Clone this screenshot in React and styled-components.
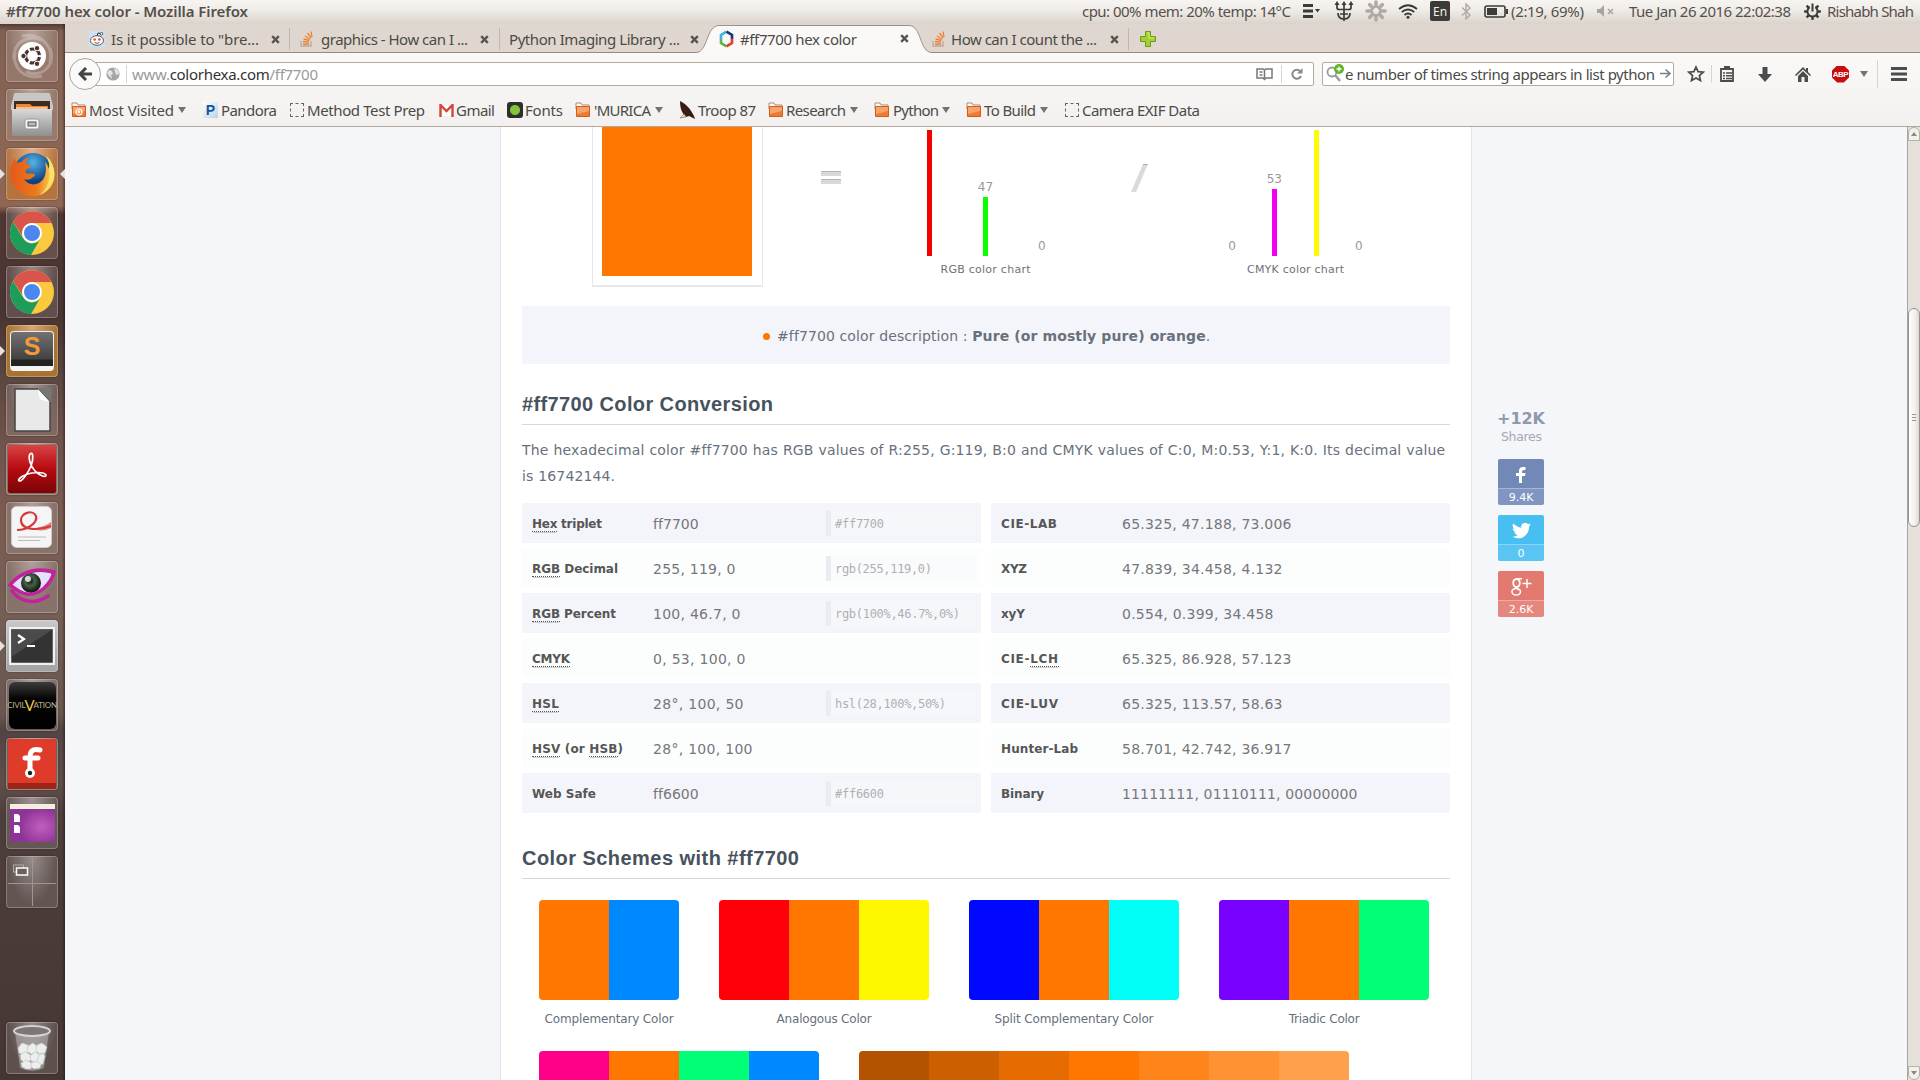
import React, { useLayoutEffect, useRef, useState } from 'react';
import styled, { createGlobalStyle, css } from 'styled-components';

const GlobalStyle = createGlobalStyle`
  * { box-sizing: border-box; }
  html, body { margin: 0; padding: 0; background: #f4f6fa; overflow: hidden; }
  svg { display: block; flex: none; }
`;

const UI = `'Noto Sans', 'Open Sans', sans-serif`;
const SITE = `'DejaVu Sans', Verdana, sans-serif`;

/* Text that spreads its letters over a known width */
const FitSpan = styled.span`
  display: inline-block;
  white-space: nowrap;
  flex: none;
  margin-left: ${(p) => p.$ml || 0}px;
`;
function Fit({ w, ml, children }) {
  const ref = useRef(null);
  const [gap, setGap] = useState(0);
  useLayoutEffect(() => {
    const el = ref.current;
    const before = el.style.letterSpacing;
    const width = el.style.width;
    el.style.letterSpacing = '0px';
    el.style.width = 'auto';
    const natural = el.getBoundingClientRect().width;
    const count = el.textContent.length;
    el.style.letterSpacing = before;
    el.style.width = width;
    setGap((w - natural) / Math.max(1, count - 1));
  }, [w]);
  return (
    <FitSpan ref={ref} $ml={ml} style={{ letterSpacing: `${gap}px`, width: `${w}px` }}>
      {children}
    </FitSpan>
  );
}

/* ---------- desktop frame ---------- */
const Desktop = styled.div`
  width: 1920px;
  height: 1080px;
  display: grid;
  grid-template: 24px 1056px / 65px 1855px;
  overflow: hidden;
  font-family: ${UI};
  color: #4c4a46;
`;
const Panel = styled.header`
  grid-column: 1 / 3;
  display: flex;
  align-items: center;
  background: linear-gradient(#f6f4f1, #f1eeea 35%, #dbd3cb);
  font-size: 15px;
  line-height: 22px;
  color: #55504b;
  padding: 0 0 2px 6px;
`;
const PanelTitle = styled.div`
  font-weight: 600;
  width: 1076px;
`;
const Slot = styled.div`
  width: ${(p) => p.$w}px;
  margin-left: ${(p) => p.$ml || 0}px;
  flex: none;
  display: flex;
  align-items: center;
  justify-content: center;
`;
const LangBox = styled.div`
  width: 20px;
  height: 20px;
  margin-left: 12px;
  border-radius: 2px;
  background: #3c3b38;
  color: #f2efea;
  font-size: 12px;
  line-height: 21px;
  text-align: center;
`;

/* ---------- launcher ---------- */
const Launcher = styled.aside`
  display: flex;
  flex-direction: column;
  padding: 6px 0 6px 6px;
  gap: 7px;
  background:
    linear-gradient(90deg, rgba(255,255,255,.03) 0 62px, rgba(30,15,10,.45) 65px),
    linear-gradient(#4c342a 0, #7d5c4e 7px, #866150 100px, #8d6150 182px, #4b312b 190px, #442e2c 290px,
      #59423c 360px, #6c4e45 420px, #77584c 500px, #705950 590px, #65524b 690px, #4e3e3b 705px, #5b4844 760px,
      #493936 790px, #453532 900px, #3f302d 1056px);
`;
const Tile = styled.div`
  position: relative;
  width: 52px;
  height: 52px;
  flex: none;
  border-radius: 4px;
  display: flex;
  align-items: center;
  justify-content: center;
  background: ${(p) => p.$bg || 'radial-gradient(ellipse at 50% 0, rgba(255,255,255,.42), rgba(255,255,255,.13) 65%)'};
  box-shadow: inset 0 0 0 1px rgba(255,255,255,.25), 0 0 2px rgba(0,0,0,.4);
  margin-top: ${(p) => (p.$last ? 'auto' : 0)};
`;
const Pip = styled.i`
  position: absolute;
  top: 21px;
  border: 5px solid transparent;
  ${(p) => (p.$right
    ? css`right: -7px; border-right-color: #e6e2df; border-left-width: 0;`
    : css`left: -6px; border-left-color: #e6e2df; border-right-width: 0;`)}
`;
const CivBox = styled.div`
  width: 47px;
  height: 47px;
  border-radius: 6px;
  background: linear-gradient(#3c3c3c, #050505 35%, #000);
  color: #b9b48c;
  display: flex;
  align-items: center;
  justify-content: center;
  font: 8px/10px 'Lato', sans-serif;
  letter-spacing: -0.2px;
  b { color: #e3c643; font-size: 15px; font-weight: 400; margin: 0 -1px; }
`;

const Ubuntu = () => (
  <svg width="52" height="52" viewBox="0 0 52 52">
    <g fill="none" stroke="#fff" opacity=".25" strokeWidth="3">
      <path d="M8 30C6 12 22 4 36 10" /><path d="M44 18c6 18-8 30-24 24" /><path d="M16 6c18-4 32 10 28 26" /><path d="M36 46C18 50 6 38 9 22" />
    </g>
    <circle cx="26" cy="26" r="14" fill="#fff" />
    <circle cx="26.500" cy="26" r="7" fill="none" stroke="#4a342e" strokeWidth="3.200" strokeDasharray="12.600 2" strokeDashoffset="-1" />
    <g fill="#4a342e" stroke="#fff" strokeWidth="1"><circle cx="17.500" cy="26" r="2.700" /><circle cx="31" cy="18.200" r="2.700" /><circle cx="31" cy="33.800" r="2.700" /></g>
  </svg>
);
const Files = () => (
  <svg width="52" height="52" viewBox="0 0 52 52">
    <defs><linearGradient id="cab" x2="0" y2="1"><stop stopColor="#d9d9d9" /><stop offset="1" stopColor="#8f8f8f" /></linearGradient></defs>
    <path d="M8 5q0-1 1-1h34q1 0 1 1l3 12v4H5v-4z" fill="#c9c7c5" />
    <path d="M8 12h36v10H8z" fill="#3f2a20" />
    <path d="M10 15h14l2 2h16v5H10z" fill="#f08437" /><path d="M10 18h31v4H10z" fill="#f6c08f" />
    <path d="M6 20h40v25q0 2-2 2H8q-2 0-2-2z" fill="url(#cab)" />
    <rect x="19" y="30" width="14" height="10" rx="2" fill="#f5f5f5" stroke="#999" /><rect x="22" y="33" width="8" height="4" fill="#bbb" stroke="#555" />
  </svg>
);
const Firefox = () => (
  <svg width="48" height="48" viewBox="0 0 48 48">
    <defs>
      <radialGradient id="fxg" cx=".5" cy=".25"><stop stopColor="#52b5e8" /><stop offset="1" stopColor="#12407f" /></radialGradient>
      <linearGradient id="fxf" x1="0" y1="0" x2="1" y2="0"><stop stopColor="#e4581c" /><stop offset=".6" stopColor="#ee7a1c" /><stop offset="1" stopColor="#fce05a" /></linearGradient>
    </defs>
    <circle cx="25" cy="22" r="19" fill="url(#fxg)" />
    <path d="M5 12C3 16 2 20 2.500 25 3.500 37 13 46 25 46c12 0 21-9 21.500-21C46.500 18 43 9 38 6c3 5 4 9 3 13-1-3-2-5-4-7 2 8 1 17-6 21-6 3-12 1-15-4 4 2 7 0 9-2 2-1 3-2 1-3-3-1-5 0-8-1-1-3 2-5 5-6 0-2-3-3-5-3 0-3 1-5 3-6-4 0-6 2-7 4-2 0-4 0-5 1-1-1-2-3-2-5-1 1-2 2-2 4z" fill="url(#fxf)" />
    <path d="M38 6c7 6 9 14 8 21-1 8-7 15-14 18 7-6 11-15 9-26 1-4 0-8-3-13z" fill="#fbe56b" opacity=".85" />
  </svg>
);
const Chrome = () => (
  <svg width="46" height="46" viewBox="0 0 46 46">
    <circle cx="23" cy="23" r="22" fill="#fbc93d" />
    <path d="M4 12A22 22 0 0 1 42.500 13H23A10 10 0 0 0 13.500 26z" fill="#d9544a" />
    <path d="M3.950 12A22 22 0 0 0 22 45l9.500-16.500A10 10 0 0 1 14 28z" fill="#1c9d5b" />
    <circle cx="23" cy="23" r="10" fill="#fff" /><circle cx="23" cy="23" r="8" fill="#4b87ee" />
  </svg>
);
const SublimeBox = styled.div`
  width: 44px;
  height: 40px;
  border-radius: 4px;
  border: 1.500px solid #eee;
  border-bottom: 5px solid #f4f4f4;
  background: linear-gradient(#727272, #414141 80%, #222 82%);
  color: #ef9a3d;
  font: bold 25px/29px 'Liberation Sans', sans-serif;
  text-align: center;
`;
const Writer = () => (
  <svg width="52" height="52" viewBox="0 0 52 52"><path d="M9 5h23l12 13v29H9z" fill="#e9e9e9" stroke="#444" strokeWidth="1.500" /><path d="M32 4l13 14V4z" fill="#777" /><path d="M32 5l12 13-8-2q-4-1-4-11z" fill="#fff" /></svg>
);
const Acrobat = () => (
  <svg width="48" height="48" viewBox="0 0 48 48">
    <defs><linearGradient id="acr" x2="0" y2="1"><stop stopColor="#d84444" /><stop offset=".5" stopColor="#b60a10" /><stop offset="1" stopColor="#7a0508" /></linearGradient></defs>
    <rect width="48" height="48" rx="2" fill="url(#acr)" />
    <path d="M22 9c3-3 4 4 1 12-3 7-8 14-11 15-4 0 1-6 12-8 8-1 13 0 14 2 0 3-6 1-11-4-5-5-7-14-5-17z" fill="none" stroke="#fff" strokeWidth="1.700" />
  </svg>
);
const Evince = () => (
  <svg width="42" height="44" viewBox="0 0 42 44">
    <rect x=".5" y=".5" width="40" height="41" rx="5" fill="#f5f5f5" stroke="#ccc" />
    <path d="M6 24C16 24 27 17 25 10 22 3 9 7 10 15c1 9 16 10 30 5" fill="none" stroke="#d5383c" strokeWidth="2.200" />
    <path d="M20 22q10 1 20-6v6q-10 5-20 0z" fill="#d5383c" opacity=".6" />
    <path d="M7 31h28M7 34.500h22" stroke="#bbb" strokeWidth="1" />
  </svg>
);
const Eye = () => (
  <svg width="48" height="38" viewBox="0 0 48 38">
    <defs><radialGradient id="iris" cx=".45" cy=".4"><stop stopColor="#111" /><stop offset=".5" stopColor="#456446" /><stop offset="1" stopColor="#182019" /></radialGradient></defs>
    <path d="M3 17C12 7 26-1 44 6c-3 13-14 22-25 20C11 25 7 21 3 17z" fill="#e4e2fa" />
    <circle cx="23" cy="15" r="10" fill="url(#iris)" /><circle cx="20" cy="11" r="3" fill="#fff" opacity=".8" />
    <g fill="none" stroke="#c3229d" strokeWidth="3.500" strokeLinecap="round"><path d="M2 17C12 5 27-1 46 4c-3 12-15 24-27 22C11 25 7 20 2 17" /><path d="M4 23c7 10 22 15 36 5" /></g>
  </svg>
);
const Terminal = () => (
  <svg width="46" height="38" viewBox="0 0 46 38">
    <rect x="1" y="1" width="44" height="36" fill="#333" stroke="#f1f1f1" strokeWidth="2.500" /><path d="M2 2h42L2 30z" fill="#555" opacity=".7" />
    <path d="M9 8l6 4-6 4M18 19h8" fill="none" stroke="#fff" strokeWidth="2.200" />
  </svg>
);
const Fritz = () => (
  <svg width="48" height="50" viewBox="0 0 48 50">
    <rect width="48" height="50" fill="#de3b2a" /><path d="M0 44h48v6H0z" fill="#9d2418" />
    <path d="M32 11c-8-2-10 2-10 7v14M17 19h13" fill="none" stroke="#fff" strokeWidth="5" strokeLinecap="round" /><circle cx="22" cy="34" r="5" fill="#fff" /><circle cx="22" cy="34" r="2.200" fill="#222" />
  </svg>
);
const WindowIcon = () => (
  <svg width="45" height="38" viewBox="0 0 45 38">
    <defs><radialGradient id="win" cx=".7" cy=".6"><stop stopColor="#c25fbf" /><stop offset="1" stopColor="#8d3497" /></radialGradient></defs>
    <rect width="45" height="38" rx="1" fill="url(#win)" /><path d="M0 0h45v5H0z" fill="#f2efdf" />
    <path d="M4 10h4l2 2v6H4zM4 21h4l2 2v6H4z" fill="#fff" />
  </svg>
);
const Workspace = () => (
  <svg width="50" height="50" viewBox="0 0 50 50">
    <path d="M25.500 1v48M1 26.500h48" stroke="#a09590" strokeWidth="1" /><rect x="6.500" y="8" width="10" height="7" fill="none" stroke="#aaa" /><rect x="9.500" y="11" width="11" height="7" fill="#6c605b" stroke="#fff" strokeWidth="1.500" />
  </svg>
);
const Trash = () => (
  <svg width="42" height="48" viewBox="0 0 42 48">
    <path d="M4 8l5 36q12 6 24 0l5-36z" fill="#c9cbca" opacity=".45" />
    <g fill="#eceded" stroke="#c3c6c4" strokeWidth=".7">
      <path d="M7 24l4-5 6 2 2 6-5 4-6-2z" /><path d="M17 22l5-3 5 4-1 6-6 1-4-3z" /><path d="M26 21l5-2 5 4-2 6-6 1-3-4z" />
      <path d="M9 31l5-3 6 3 0 5-5 3-5-3z" /><path d="M19 32l5-4 6 3 1 5-6 3-5-2z" /><path d="M28 31l4-2 2 3-2 8-5 2-1-5z" />
      <path d="M10 39l5-3 6 3-1 6-5 0-4-2z" /><path d="M20 39l5-2 5 3-1 4-6 1-3-2z" />
    </g>
    <ellipse cx="21" cy="7" rx="18" ry="5" fill="#7d7773" stroke="#d2d5d3" strokeWidth="2" />
  </svg>
);

/* ---------- browser chrome ---------- */
const Browser = styled.main`
  display: grid;
  grid-template-rows: 29px 74px 953px;
  min-width: 0;
`;
const TabStrip = styled.nav`
  display: flex;
  align-items: center;
  background: #dfd7cf;
  border-bottom: 1px solid #8f8a84;
  font-size: 15px;
  line-height: 26px;
`;
const Tab = styled.div`
  height: 28px;
  width: ${(p) => p.$w}px;
  padding-left: ${(p) => p.$pl}px;
  padding-top: 2px;
  flex: none;
  display: flex;
  align-items: center;
  ${(p) => p.$sep && css`background: linear-gradient(#bfb7b0, #bfb7b0) right 4px / 1px 22px no-repeat;`}
`;
const ActiveTab = styled.div`
  position: relative;
  width: 236px;
  height: 29px;
  margin-bottom: -1px;
  padding-left: 23px;
  flex: none;
  display: flex;
  align-items: center;
  > * + * { position: relative; }
`;
const TabShape = styled.svg`
  position: absolute;
  left: 0;
  top: 0;
`;
const Toolbars = styled.div`
  display: grid;
  grid-template-rows: 43px 30px;
  background: linear-gradient(#faf9f7, #f2f1f0);
  border-bottom: 1px solid #b5a99e;
`;
const NavBar = styled.div`
  display: flex;
  align-items: center;
  padding: 0 0 1px 4px;
  font-size: 15px;
  line-height: 22px;
`;
const BackButton = styled.div`
  position: relative;
  z-index: 1;
  width: 32px;
  height: 32px;
  border-radius: 50%;
  border: 1px solid #aaa39c;
  background: #fbfaf9;
  display: flex;
  align-items: center;
  justify-content: center;
`;
const Field = styled.div`
  width: ${(p) => p.$w}px;
  height: 24px;
  margin-left: ${(p) => p.$ml}px;
  padding-left: ${(p) => p.$pl}px;
  padding-bottom: 1px;
  border: 1px solid #b5aaa0;
  border-radius: 2px;
  background: #fff;
  display: flex;
  align-items: center;
  flex: none;
`;
const Rule = styled.i`
  width: 1px;
  height: ${(p) => p.$h || 18}px;
  margin-left: ${(p) => p.$ml || 0}px;
  background: #d9d4ce;
  flex: none;
`;
const Url = styled.div`
  color: #999;
  width: 1124px;
  margin-left: 5px;
  b { font-weight: 400; color: #333; }
`;
const Abp = styled.div`
  width: 17px;
  height: 17px;
  margin-left: 21px;
  background: #c70d0d;
  color: #fff;
  clip-path: polygon(30% 0, 70% 0, 100% 30%, 100% 70%, 70% 100%, 30% 100%, 0 70%, 0 30%);
  font: bold 8px/17px 'Liberation Sans', sans-serif;
  letter-spacing: -0.5px;
  text-align: center;
`;
const Down = styled.i`
  width: 0;
  height: 0;
  margin-left: ${(p) => p.$ml}px;
  border: 4px solid transparent;
  border-top: 6px solid #77726d;
  border-bottom: 0;
  flex: none;
`;
const Bookmarks = styled.div`
  display: flex;
  align-items: center;
  font-size: 15px;
  line-height: 28px;
  padding-bottom: 2px;
`;
const Bookmark = styled.div`
  width: ${(p) => p.$w}px;
  flex: none;
  display: flex;
  align-items: center;
`;
const BlankIcon = styled.i`
  width: 14px;
  height: 14px;
  border: 1px dashed #666;
`;
const Pandora = styled.i`
  width: 15px;
  height: 16px;
  background: linear-gradient(135deg, #fff, #b9d3e8);
  color: #14549b;
  font: bold 14px/16px 'Liberation Sans', sans-serif;
  text-align: center;
`;
const FontsIcon = styled.i`
  width: 16px;
  height: 16px;
  border-radius: 3px;
  background: radial-gradient(circle, #86c440 0 4.500px, #2c3129 5.500px);
`;
const Folder = ({ feed }) => (
  <svg width="16" height="16" viewBox="0 0 16 16">
    <path d="M1 1h5l1 2h7v4H1z" fill="#fff" stroke="#b98665" /><path d="M1.500 14.500v-10h13v10z" fill="#ee7b35" stroke="#cf5d1b" /><path d="M2 5h12v4L2 12z" fill="#f6a36c" />
    {feed && <g fill="none" stroke="#fff" strokeWidth="1.200"><circle cx="8" cy="10" r="3" /><circle cx="8" cy="10" r=".8" /></g>}
  </svg>
);
const StackIcon = () => (
  <svg width="14" height="16" viewBox="0 0 14 16"><path d="M1 10v5h10v-5" fill="none" stroke="#b9aaa0" strokeWidth="1.300" /><path d="M3 13h6M3 10.500l6 .6M3.600 8l5.800 1.500M5 5l5 3.200M7.500 2l3.700 5M11 .5l1 5.500" stroke="#ee8033" strokeWidth="1.300" /></svg>
);
const CloseX = () => <svg width="9" height="9" viewBox="0 0 9 9"><path d="M1.200 1.200l6.600 6.600M7.800 1.200L1.200 7.800" stroke="#59544f" strokeWidth="2.400" /></svg>;

/* ---------- web page ---------- */
const Viewport = styled.section`
  display: flex;
  background: #f4f6fa;
  overflow: hidden;
  font-family: ${SITE};
`;
const Card = styled.article`
  width: 972px;
  margin-left: 435px;
  padding: 0 21px;
  background: #fff;
  border: solid #e3e5ea;
  border-width: 0 1px;
  flex: none;
`;
const Hero = styled.div`
  display: grid;
  grid-template-columns: 171px 138px 169px 141px 169px;
  padding-left: 70px;
  height: 179px;
`;
const Frame = styled.div`
  height: 160px;
  padding: 0 10px 10px 9px;
  border: solid #e8e8e8;
  border-width: 0 1px 2px;
  &::before { content: ''; display: block; height: 149px; background: #ff7700; }
`;
const Sign = styled.div`
  display: flex;
  justify-content: center;
  padding: ${(p) => p.$pt}px 2px 0 0;
`;
const Chart = styled.div`
  text-align: center;
  font-size: 11px;
  line-height: 16px;
  color: #6f7276;
`;
const Bars = styled.div`
  display: flex;
  align-items: flex-end;
  height: 129px;
  margin-bottom: 6px;
`;
const BarCol = styled.div`
  flex: 1;
  display: flex;
  flex-direction: column;
  align-items: center;
  font-size: 12px;
  line-height: 20px;
  color: #999;
`;
const Bar = styled.i`
  width: 5px;
  height: ${(p) => p.$h}px;
  background: ${(p) => p.$c};
`;
const Description = styled.div`
  height: 58px;
  background: #f4f5fa;
  display: flex;
  align-items: center;
  padding: 1px 0 0 241px;
  font-size: 14px;
  color: #68717d;
`;
const Dot = styled.i`
  width: 7px;
  height: 7px;
  margin: 2px 7px 0 0;
  border-radius: 50%;
  background: #ff7700;
`;
const Heading = styled.h2`
  margin: ${(p) => p.$mt}px 0 0;
  height: ${(p) => p.$h}px;
  border-bottom: 1px solid #d5d8db;
  font: bold 20px/24px 'Liberation Sans', Arial, sans-serif;
  color: #47525d;
`;
const Para = styled.p`
  margin: 12px 0 14px;
  font-size: 14px;
  line-height: 26px;
  word-spacing: 0.3px;
  color: #68717d;
`;
const Tables = styled.div`
  display: grid;
  grid-template-columns: 459px 459px;
  gap: 10px;
`;
const Table = styled.div`
  display: grid;
  grid-auto-rows: 40px;
  gap: 5px;
`;
const Row = styled.div`
  display: grid;
  grid-template-columns: 121px 173px 150px;
  align-items: center;
  padding: 1px 0 0 10px;
  border-radius: 2px;
  background: ${(p) => (p.$even ? '#fcfefd' : '#f4f5fa')};
`;
const Name = styled.div`
  font-size: 12px;
  line-height: 16px;
  font-weight: bold;
  color: #565656;
  abbr { text-decoration: none; display: inline-block; height: 16px; border-bottom: 1px dotted #555; box-shadow: 0 2px 0 -1px #ccc; }
`;
const Value = styled.div`
  font-size: 14px;
  line-height: 18px;
  color: #75777a;
`;
const Code = styled.code`
  height: 25px;
  padding-left: 4px;
  border-left: 5px solid #ebecf0;
  background: ${(p) => (p.$even ? '#fafbfc' : '#f6f7fb')};
  font: 12px/26px 'DejaVu Sans Mono', monospace;
  color: #aeb0b3;
`;
const Schemes = styled.div`
  display: flex;
  gap: 40px;
  padding: 21px 0 0 17px;
`;
const Scheme = styled.figure`
  margin: 0;
  height: 130px;
  text-align: center;
  font-size: 12px;
  line-height: 18px;
  color: #66707c;
`;
const Palette = styled.div`
  display: flex;
  height: 100px;
  margin-bottom: 10px;
  border-radius: 4px;
  overflow: hidden;
`;
const Swatch = styled.i`
  width: 70px;
  background: ${(p) => p.$c};
`;
const Shares = styled.aside`
  width: 48px;
  margin-left: 26px;
  padding-top: 281px;
  flex: none;
  color: #a3a9b6;
  font-size: 12.500px;
  line-height: 16px;
`;
const Total = styled.div`
  font-size: 16px;
  line-height: 21px;
  font-weight: bold;
  color: #8e99ae;
`;
const ShareList = styled.div`
  display: grid;
  gap: 10px;
  margin-top: 14px;
`;
const ShareButton = styled.div`
  width: 46px;
  height: 46px;
  border-radius: 2px;
  background: ${(p) => p.$c};
  color: #fff;
  overflow: hidden;
`;
const ShareIcon = styled.div`
  height: 29px;
  display: flex;
  align-items: center;
  justify-content: center;
  padding-top: 3px;
`;
const ShareCount = styled.div`
  height: 17px;
  border-top: 1px solid rgba(255,255,255,.3);
  background: rgba(255,255,255,.1);
  font-size: 11px;
  line-height: 17px;
  text-align: center;
`;
const Scrollbar = styled.div`
  width: 13px;
  margin-left: auto;
  flex: none;
  display: flex;
  flex-direction: column;
  align-items: center;
  background: #e5e0d9;
  border-left: 1px solid #aaa49e;
`;
const ScrollEnd = styled.div`
  width: 12px;
  height: 14px;
  background: #f2f0ed;
  border: 1px solid #b7b0a9;
  border-radius: ${(p) => (p.$top ? '7px 7px 0 0' : '0 0 7px 7px')};
  margin-top: ${(p) => (p.$top ? 0 : 'auto')};
  display: flex;
  align-items: center;
  justify-content: center;
`;
const Thumb = styled.div`
  width: 12px;
  height: 219px;
  margin-top: 167px;
  border: 1px solid #99938e;
  border-radius: 6px;
  background: linear-gradient(90deg, #fff, #f2f0ee 60%, #ddd8d2);
  display: grid;
  place-content: center;
  gap: 2px;
  i { width: 4px; height: 1px; background: #999; }
`;

const A = ({ children }) => <abbr>{children}</abbr>;
const left = [
  [<><A>Hex</A> triplet</>, 70, 'ff7700', 45.5, '#ff7700', 49],
  [<><A>RGB</A> Decimal</>, 86, '255, 119, 0', 82.5, 'rgb(255,119,0)', 97],
  [<><A>RGB</A> Percent</>, 84, '100, 46.7, 0', 87.5, 'rgb(100%,46.7%,0%)', 125],
  [<A>CMYK</A>, 38, '0, 53, 100, 0', 92.5],
  [<A>HSL</A>, 27, '28°, 100, 50', 90.5, 'hsl(28,100%,50%)', 111],
  [<><A>HSV</A> (or <A>HSB</A>)</>, 91, '28°, 100, 100', 99.5],
  ['Web Safe', 64, 'ff6600', 45.5, '#ff6600', 49],
];
const right = [
  ['CIE-LAB', 56, '65.325, 47.188, 73.006', 169.5],
  ['XYZ', 26, '47.839, 34.458, 4.132', 160.5],
  ['xyY', 24, '0.554, 0.399, 34.458', 151.5],
  [<>CIE-<A>LCH</A></>, 57, '65.325, 86.928, 57.123', 169.5],
  ['CIE-LUV', 57, '65.325, 113.57, 58.63', 160.5],
  ['Hunter-Lab', 77, '58.701, 42.742, 36.917', 169.5],
  ['Binary', 43, '11111111, 01110111, 00000000', 235.5],
];
const ConversionTable = ({ rows }) => (
  <Table>
    {rows.map(([name, nw, value, vw, code, cw], i) => (
      <Row key={i} $even={i % 2 === 1}>
        <Name><Fit w={nw}>{name}</Fit></Name>
        <Value><Fit w={vw}>{value}</Fit></Value>
        {code && <Code $even={i % 2 === 1}><Fit w={cw}>{code}</Fit></Code>}
      </Row>
    ))}
  </Table>
);
const ColorChart = ({ data, caption, w }) => (
  <Chart>
    <Bars>{data.map(([label, h, c], i) => <BarCol key={i}>{label}{h > 0 && <Bar $h={h} $c={c} />}</BarCol>)}</Bars>
    <Fit w={w}>{caption}</Fit>
  </Chart>
);
const ColorScheme = ({ colors, name, w }) => (
  <Scheme>
    <Palette>{colors.map((c) => <Swatch key={c} $c={c} />)}</Palette>
    {name && <Fit w={w}>{name}</Fit>}
  </Scheme>
);

export default function App() {
  return (
    <Desktop>
      <GlobalStyle />
      <Panel>
        <PanelTitle><Fit w={242}>#ff7700 hex color - Mozilla Firefox</Fit></PanelTitle>
        <Fit w={209}>cpu: 00% mem: 20% temp: 14°C</Fit>
        <Slot $w={17} $ml={12}><svg width="17" height="16" viewBox="0 0 17 16"><path d="M0 2.500h10M0 8h10M0 13.500h10" stroke="#3c3b38" strokeWidth="3" /><path d="M12 6h5l-2.500 3.500z" fill="#3c3b38" /></svg></Slot>
        <Slot $w={20} $ml={14}><svg width="20" height="20" viewBox="0 0 20 20"><path d="M10 2v18M3 3v3.500q0 2 2 2h10q2 0 2-2V3M4 12q0 6 6 6t6-6M6 13h8" fill="none" stroke="#3c3b38" strokeWidth="1.700" /><path d="M.5 4L3 0l2.500 4zM7.500 4L10 0l2.500 4zM14.500 4L17 0l2.500 4z" fill="#3c3b38" /></svg></Slot>
        <Slot $w={22} $ml={11}><svg width="22" height="22" viewBox="-11 -11 22 22"><g stroke="#b1aba5" strokeWidth="3.600" strokeLinecap="round">{[0, 45, 90, 135, 180, 225, 270, 315].map((a) => <path key={a} d="M0-4.500v-4.500" transform={`rotate(${a})`} />)}</g><circle r="4.500" fill="none" stroke="#b1aba5" strokeWidth="2.500" /></svg></Slot>
        <Slot $w={20} $ml={11}><svg width="20" height="15" viewBox="0 0 20 15"><g fill="none" stroke="#3c3b38" strokeWidth="1.800"><path d="M1 5q9-7.500 18 0M3.800 8q6.200-5 12.400 0M6.500 11q3.500-3 7 0" /></g><circle cx="10" cy="13.200" r="1.500" fill="#3c3b38" /></svg></Slot>
        <LangBox>En</LangBox>
        <Slot $w={10} $ml={11}><svg width="10" height="17" viewBox="0 0 10 17"><path d="M1 4.500l8 7.500-4 4V1l4 4-8 7.500" fill="none" stroke="#b1aba5" strokeWidth="1.500" /></svg></Slot>
        <Slot $w={24} $ml={13}><svg width="24" height="13" viewBox="0 0 24 13"><rect x="1" y="1" width="20" height="11" rx="2" fill="none" stroke="#3c3b38" strokeWidth="1.600" /><path d="M3 3h10v7H3zM22 4h2v5h-2z" fill="#3c3b38" /></svg></Slot>
        <Fit w={73} ml={3}>(2:19, 69%)</Fit>
        <Slot $w={18} $ml={13}><svg width="18" height="12" viewBox="0 0 18 12"><path d="M0 4h3l4-4v12L3 8H0z" fill="#aaa49e" /><path d="M11 4l5 5M16 4l-5 5" stroke="#aaa49e" strokeWidth="1.500" /></svg></Slot>
        <Fit w={162} ml={14}>Tue Jan 26 2016 22:02:38</Fit>
        <Slot $w={17} $ml={13}><svg width="17" height="17" viewBox="-8.500 -8.500 17 17"><g stroke="#3c3b38" strokeWidth="2.400">{[45, 90, 135, 180, 225, 270, 315].map((a) => <path key={a} d="M0-5v-3.400" transform={`rotate(${a})`} />)}<path d="M0-8V0" strokeWidth="2" /></g><path d="M-2.800-4.300a5.100 5.100 0 1 0 5.600 0" fill="none" stroke="#3c3b38" strokeWidth="2" /></svg></Slot>
        <Fit w={87} ml={6}>Rishabh Shah</Fit>
      </Panel>

      <Launcher>
        <Tile><Ubuntu /></Tile>
        <Tile><Files /></Tile>
        <Tile $bg="radial-gradient(ellipse at 50% 0, #e3b18c, #b5733d 70%)"><Pip /><Pip $right /><Firefox /></Tile>
        <Tile><Chrome /></Tile>
        <Tile><Chrome /></Tile>
        <Tile $bg="radial-gradient(ellipse at 50% 0, #d5a777, #a67332 70%)"><Pip /><SublimeBox>S</SublimeBox></Tile>
        <Tile><Writer /></Tile>
        <Tile><Acrobat /></Tile>
        <Tile><Evince /></Tile>
        <Tile><Eye /></Tile>
        <Tile $bg="linear-gradient(#c8c8c8, #a2a2a2)"><Pip /><Terminal /></Tile>
        <Tile><CivBox>CIVIL<b>V</b>ATION</CivBox></Tile>
        <Tile><Fritz /></Tile>
        <Tile><WindowIcon /></Tile>
        <Tile><Workspace /></Tile>
        <Tile $last><Trash /></Tile>
      </Launcher>

      <Browser>
        <TabStrip>
          <Tab $w={225} $pl={24} $sep>
            <svg width="16" height="16" viewBox="0 0 16 16"><path d="M0 0h16v16H0z" fill="#cde1f5" /><path d="M8 5l1-3 3 .6" fill="none" stroke="#333" /><circle cx="12.500" cy="2.800" r="1.300" fill="#fff" stroke="#333" strokeWidth=".8" /><ellipse cx="8" cy="9.500" rx="6.500" ry="4.800" fill="#fff" stroke="#444" strokeWidth=".9" /><circle cx="5.600" cy="8.500" r="1.300" fill="#f1461d" /><circle cx="10.400" cy="8.500" r="1.300" fill="#f1461d" /><path d="M5.500 11.500q2.500 1.600 5 0" fill="none" stroke="#333" strokeWidth=".8" /></svg>
            <Fit w={148} ml={6}>Is it possible to "bre...</Fit><Slot $w={9} $ml={12}><CloseX /></Slot>
          </Tab>
          <Tab $w={210} $pl={10} $sep><StackIcon /><Fit w={147} ml={7}>graphics - How can I ...</Fit><Slot $w={9} $ml={12}><CloseX /></Slot></Tab>
          <Tab $w={196} $pl={9}><Fit w={171}>Python Imaging Library ...</Fit><Slot $w={9} $ml={10}><CloseX /></Slot></Tab>
          <ActiveTab>
            <TabShape width="236" height="29" viewBox="0 0 236 29"><path d="M0 28.500C12 28.500 10 1.500 23 1.500H213C226 1.500 223 28.500 236 28.500V29H0z" fill="#faf9f7" /><path d="M0 28.500C12 28.500 10 1.500 23 1.500H213C226 1.500 223 28.500 236 28.500" fill="none" stroke="#99938d" /></TabShape>
            <svg width="15" height="18" viewBox="0 0 15 18"><g fill="none" strokeWidth="2.600"><path d="M7.500 1.700L2 5v5" stroke="#3fb3dc" /><path d="M7.500 1.700L13 5v4" stroke="#12366f" /><path d="M2 9.500V13l5.500 3.300" stroke="#53b942" /><path d="M13 8.500V13l-5.500 3.300" stroke="#e43a30" /></g></svg>
            <Fit w={117} ml={6}>#ff7700 hex color</Fit><Slot $w={9} $ml={43}><CloseX /></Slot>
          </ActiveTab>
          <Tab $w={197} $pl={0} $sep><StackIcon /><Fit w={146} ml={5}>How can I count the ...</Fit><Slot $w={9} $ml={13}><CloseX /></Slot></Tab>
          <Slot $w={16} $ml={11}><svg width="16" height="18" viewBox="0 -2 16 18"><path d="M5.500.5h5v5h5v5h-5v5h-5v-5h-5v-5h5z" fill="#a5d02f" stroke="#6a9a1c" /><path d="M7 2h2v5h5" fill="none" stroke="#d3ec83" /></svg></Slot>
        </TabStrip>

        <Toolbars>
          <NavBar>
            <BackButton><svg width="14" height="14" viewBox="0 0 14 14"><path d="M8 1L2 7l6 6M3 7h11" fill="none" stroke="#444" strokeWidth="3" /></svg></BackButton>
            <Field $w={1220} $ml={-7} $pl={11}>
              <svg width="14" height="14" viewBox="0 0 14 14"><circle cx="7" cy="7" r="6.600" fill="#a5a5a5" /><path d="M3 3l3 1 1 3-2 1 1 4-3-3-2-3zM8 1l4 2 1 4-3 1-1-3z" fill="#e3e3e3" /></svg>
              <Rule $ml={6} />
              <Url><Fit w={186}>www.<b>colorhexa.com</b>/ff7700</Fit></Url>
              <svg width="17" height="14" viewBox="0 0 17 14"><path d="M1 2h6l1.500 1.200L10 2h6v9h-6l-1.500 1.500L7 11H1zM3.500 5h3M3.500 8h3M8.500 4v7" fill="none" stroke="#777" strokeWidth="1.500" /></svg>
              <Rule $ml={8} />
              <Slot $w={14} $ml={8}><svg width="12" height="12" viewBox="0 0 12 12"><path d="M10 8a4.500 4.500 0 1 1-.5-4.500" fill="none" stroke="#8a8a8a" strokeWidth="2" /><path d="M11.500 0v5.500H6z" fill="#8a8a8a" /></svg></Slot>
            </Field>
            <Field $w={352} $ml={8} $pl={3}>
              <svg width="18" height="19" viewBox="0 0 18 19"><circle cx="6" cy="8" r="4.500" fill="none" stroke="#989ba2" strokeWidth="1.800" /><path d="M9 11l5 6" stroke="#989ba2" strokeWidth="2.500" /><circle cx="13" cy="5" r="5" fill="#63b42c" /><path d="M13 2.500v5M10.500 5h5" stroke="#fff" strokeWidth="1.300" /></svg>
              <Fit w={310} ml={1}>e number of times string appears in list python</Fit>
              <Slot $w={12} $ml={4}><svg width="11" height="11" viewBox="0 0 11 11"><path d="M0 5.500h9M5.500 1.500l4.500 4-4.500 4" fill="none" stroke="#7a7f88" strokeWidth="1.600" /></svg></Slot>
            </Field>
            <Slot $w={18} $ml={13}><svg width="18" height="18" viewBox="0 0 18 18"><path d="M9 2l2.100 4.700 5.100.5-3.800 3.400 1.100 5L9 13l-4.500 2.600 1.100-5L1.800 7.200l5.100-.5z" fill="none" stroke="#4c4c4c" strokeWidth="1.700" /></svg></Slot>
            <Rule $ml={6} $h={18} />
            <Slot $w={14} $ml={8}><svg width="14" height="16" viewBox="0 0 14 16"><path d="M1 3h12v12H1z" fill="none" stroke="#4c4c4c" strokeWidth="1.800" /><path d="M4 0h6v4H4zM3 6.200h2v1.500H3zM6 6.200h6v1.500H6zM3 9h2v1.500H3zM6 9h6v1.500H6zM3 11.700h2v1.500H3zM6 11.700h6v1.500H6z" fill="#4c4c4c" /></svg></Slot>
            <Slot $w={14} $ml={24}><svg width="14" height="15" viewBox="0 0 14 15"><path d="M4.500 0h5v7H14l-7 8-7-8h4.500z" fill="#4c4c4c" /></svg></Slot>
            <Slot $w={16} $ml={23}><svg width="16" height="15" viewBox="0 0 16 15"><path d="M0 8l8-8 3 3V1h2v4l3 3-1 1-7-6.500L1 9z" fill="#4c4c4c" /><path d="M3 9l5-5 5 5v6H9.500v-5h-3v5H3z" fill="#4c4c4c" /></svg></Slot>
            <Abp>ABP</Abp>
            <Down $ml={11} />
            <Rule $ml={9} $h={28} />
            <Slot $w={16} $ml={13}><svg width="16" height="14" viewBox="0 0 16 14"><path d="M0 1.500h16M0 7h16M0 12.500h16" stroke="#4c4c4c" strokeWidth="2.800" /></svg></Slot>
          </NavBar>
          <Bookmarks>
            <Bookmark $w={138}><Slot $w={15} $ml={6}><Folder feed /></Slot><Fit w={85} ml={3}>Most Visited</Fit><Down $ml={4} /></Bookmark>
            <Bookmark $w={87}><Pandora>P</Pandora><Fit w={56} ml={3}>Pandora</Fit></Bookmark>
            <Bookmark $w={149}><BlankIcon /><Fit w={118} ml={3}>Method Test Prep</Fit></Bookmark>
            <Bookmark $w={68}><svg width="15" height="13" viewBox="0 0 15 13"><path d="M1 1h13v11H1z" fill="#fff" /><path d="M1.500 13V1l6 6 6-6v12" fill="none" stroke="#d4443a" strokeWidth="2.400" /></svg><Fit w={39} ml={2}>Gmail</Fit></Bookmark>
            <Bookmark $w={68}><FontsIcon /><Fit w={38} ml={2}>Fonts</Fit></Bookmark>
            <Bookmark $w={104}><Folder /><Fit w={57} ml={3}>'MURICA</Fit><Down $ml={4} /></Bookmark>
            <Bookmark $w={89}><svg width="16" height="18" viewBox="0 0 16 18"><path d="M1 0c6 3 10 7 14 15l1 3-6-3-3 1C3 12 1 8 1 0z" fill="#3a1c12" /><path d="M1 17l4-4 2 3z" fill="#e8e0d0" stroke="#88786a" strokeWidth=".7" /></svg><Fit w={58} ml={3}>Troop 87</Fit></Bookmark>
            <Bookmark $w={106}><Folder /><Fit w={60} ml={2}>Research</Fit><Down $ml={4} /></Bookmark>
            <Bookmark $w={92}><Folder /><Fit w={46} ml={3}>Python</Fit><Down $ml={3} /></Bookmark>
            <Bookmark $w={99}><Folder /><Fit w={52} ml={2}>To Build</Fit><Down $ml={4} /></Bookmark>
            <Bookmark $w={140}><BlankIcon /><Fit w={118} ml={3}>Camera EXIF Data</Fit></Bookmark>
          </Bookmarks>
        </Toolbars>

        <Viewport>
          <Card>
            <Hero>
              <Frame />
              <Sign $pt={44}><svg width="20" height="13" viewBox="0 0 20 13"><path d="M0 0h20v5H0zM0 8h20v5H0z" fill="#d9d9d9" /><path d="M0 .5h20M0 8.500h20" stroke="#b5b5b5" /></svg></Sign>
              <ColorChart w={90} caption="RGB color chart" data={[['', 126, '#f30000'], ['47', 59, '#0cff00'], ['0', 0]]} />
              <Sign $pt={37}><svg width="17" height="28" viewBox="0 0 17 28"><path d="M12 0h5L5 28H0z" fill="#dadada" /><path d="M12 .5h5" stroke="#b0b0b0" /></svg></Sign>
              <ColorChart w={97} caption="CMYK color chart" data={[['0', 0], ['53', 67, '#f200f2'], ['', 126, '#fffb00'], ['0', 0]]} />
            </Hero>
            <Description><Dot /><Fit w={433}>#ff7700 color description : <b>Pure (or mostly pure) orange</b>.</Fit></Description>
            <Heading $mt={28} $h={33}><Fit w={251}>#ff7700 Color Conversion</Fit></Heading>
            <Para>
              <Fit w={923}>The hexadecimal color #ff7700 has RGB values of R:255, G:119, B:0 and CMYK values of C:0, M:0.53, Y:1, K:0. Its decimal value</Fit>
              <Fit w={93}>is 16742144.</Fit>
            </Para>
            <Tables><ConversionTable rows={left} /><ConversionTable rows={right} /></Tables>
            <Heading $mt={33} $h={33}><Fit w={277}>Color Schemes with #ff7700</Fit></Heading>
            <Schemes>
              <ColorScheme name="Complementary Color" w={129} colors={['#ff7700', '#0088ff']} />
              <ColorScheme name="Analogous Color" w={95} colors={['#ff0008', '#ff7700', '#fff700']} />
              <ColorScheme name="Split Complementary Color" w={159} colors={['#0008ff', '#ff7700', '#00fff7']} />
              <ColorScheme name="Triadic Color" w={71} colors={['#7700ff', '#ff7700', '#00ff77']} />
            </Schemes>
            <Schemes>
              <ColorScheme colors={['#ff0088', '#ff7700', '#00ff77', '#0088ff']} />
              <ColorScheme colors={['#b35300', '#cc5f00', '#e66b00', '#ff7700', '#ff851a', '#ff9233', '#ffa04d']} />
            </Schemes>
          </Card>
          <Shares>
            <Total><Fit w={48} ml={-1}>+12K</Fit></Total>
            <Fit w={41} ml={3}>Shares</Fit>
            <ShareList>
              <ShareButton $c="#7289b8"><ShareIcon><svg width="10" height="16" viewBox="0 0 10 16"><path d="M3 16V9H0V6h3V4q0-4 4-4h2.500v3H8Q6 3 6 4.500V6h3.500L9 9H6v7z" fill="#fff" /></svg></ShareIcon><ShareCount>9.4K</ShareCount></ShareButton>
              <ShareButton $c="#48bff1"><ShareIcon><svg width="19" height="16" viewBox="0 2.500 24 20"><path fill="#fff" d="M23.950 4.570a10 10 0 0 1-2.820.78 4.950 4.950 0 0 0 2.160-2.720c-.95.550-2 .95-3.130 1.180a4.920 4.920 0 0 0-8.380 4.480C7.690 8.100 4.070 6.130 1.640 3.160a4.920 4.920 0 0 0 1.520 6.570 4.900 4.900 0 0 1-2.230-.61v.06c0 2.380 1.700 4.370 3.950 4.820a5 5 0 0 1-2.210.09 4.940 4.940 0 0 0 4.600 3.420A9.870 9.870 0 0 1 0 19.540a14 14 0 0 0 7.550 2.210c9.050 0 14-7.500 14-13.980 0-.21 0-.42-.02-.63a9.940 9.940 0 0 0 2.420-2.570z" /></svg></ShareIcon><ShareCount>0</ShareCount></ShareButton>
              <ShareButton $c="#e27a70"><ShareIcon><svg width="21" height="18" viewBox="0 0 21 18"><g fill="none" stroke="#fff"><ellipse cx="5.500" cy="5" rx="3.300" ry="4" strokeWidth="1.900" /><ellipse cx="5.200" cy="13.700" rx="4.300" ry="3.300" strokeWidth="1.500" /><path d="M6 .8h5M6.500 8.800q-3 1 0 2l2 1.500" strokeWidth="1.400" /><path d="M16 1v9M11.500 5.500h9" strokeWidth="1.500" /></g></svg></ShareIcon><ShareCount>2.6K</ShareCount></ShareButton>
            </ShareList>
          </Shares>
          <Scrollbar>
            <ScrollEnd $top><svg width="6" height="4" viewBox="0 0 6 4"><path d="M0 4l3-4 3 4z" fill="#888" /></svg></ScrollEnd>
            <Thumb><i /><i /><i /></Thumb>
            <ScrollEnd><svg width="6" height="4" viewBox="0 0 6 4"><path d="M0 0l3 4 3-4z" fill="#888" /></svg></ScrollEnd>
          </Scrollbar>
        </Viewport>
      </Browser>
    </Desktop>
  );
}
